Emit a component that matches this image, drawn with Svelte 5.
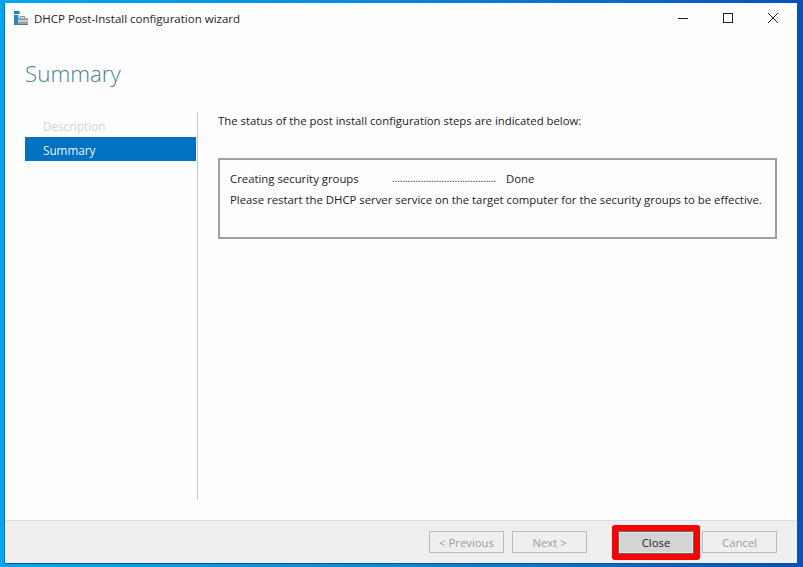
<script>
  const steps = [
    { label: 'Description', active: false },
    { label: 'Summary', active: true }
  ];
</script>

<div class="desktop">
  <div class="window">
    <div class="titlebar">
      <svg class="app-icon" width="16" height="16" viewBox="0 0 16 16">
        <rect x="0" y="1" width="5.500" height="3" fill="#1f7fc4" />
        <rect x="0" y="5" width="4.500" height="10" fill="#2a86c8" />
        <path d="M6.500 8V6.500h4V8" fill="none" stroke="#7f8c94" />
        <rect x="4" y="8" width="10" height="7" fill="#98a4ab" />
        <rect x="4" y="10.500" width="10" height="1" fill="#eef2f4" />
        <rect x="4" y="14" width="10" height="1" fill="#66737b" />
      </svg>
      <span class="title">DHCP Post-Install configuration wizard</span>
      <div class="controls">
        <svg width="12" height="12" viewBox="0 0 12 12"><path d="M1 6.500h10" stroke="#222" fill="none" /></svg>
        <svg width="12" height="12" viewBox="0 0 12 12"><rect x="1.500" y="1.500" width="9" height="9" stroke="#222" fill="none" /></svg>
        <svg width="12" height="12" viewBox="0 0 12 12"><path d="M1 1l10 10M11 1L1 11" stroke="#222" fill="none" /></svg>
      </div>
    </div>

    <h1>Summary</h1>

    <div class="body">
      <nav class="steps">
        {#each steps as step}
          <div class="step" class:active={step.active}>{step.label}</div>
        {/each}
      </nav>
      <main class="content">
        <p class="intro">The status of the post install configuration steps are indicated below:</p>
        <div class="status">
          <div class="status-row">
            <span class="task">Creating security groups</span>
            <span class="dots">........................................</span>
            <span>Done</span>
          </div>
          <div class="note">Please restart the DHCP server service on the target computer for the security groups to be effective.</div>
        </div>
      </main>
    </div>

    <footer class="footer">
      <button disabled>&lt; Previous</button>
      <button disabled>Next &gt;</button>
      <span class="ring"><button class="close">Close</button></span>
      <button disabled>Cancel</button>
    </footer>
  </div>
</div>

<style>
  :global(body){margin:0}
  .desktop{width:803px;height:567px;box-sizing:border-box;padding:3px 6px 4px 5px;background:linear-gradient(90deg,#00a6f2 0,#0a8be0 45%,#0b4fbc 100%);font-family:"Open Sans","Noto Sans",sans-serif;overflow:hidden}
  .window{height:100%;display:flex;flex-direction:column;background:#fdfdfd;box-shadow:0 1px 0 #06568f,-1px 0 0 #0a75b8;color:#222}
  .titlebar{display:flex;align-items:center;height:30px;padding:0 0 0 9px;flex:none}
  .title{margin-left:4px;font-size:11.5px;color:#1d1d1d}
  .controls{margin-left:auto;display:flex;gap:33px;padding-right:18px;align-items:center}
  .controls svg{display:block}
  h1{margin:23px 0 0 20px;font-size:22.4px;font-weight:300;line-height:36px;color:#4b7f96;height:36px;flex:none}
  .body{display:flex;flex:1;min-height:0;margin-top:20px;padding-bottom:20px}
  .steps{width:171px;margin-left:20px;padding-top:1px;flex:none}
  .step{height:24px;line-height:26px;padding-left:18px;font-size:11.7px;color:#d4d4d4}
  .step.active{background:#0072c0;color:#eaf4fb}
  .content{flex:1;min-width:0;margin-left:1px;border-left:1px solid #c9c9c9;padding-left:20px;padding-right:20px}
  .intro{margin:0;padding-top:1px;font-size:11.35px;line-height:16px;color:#222}
  .status{margin-top:29px;height:81px;box-sizing:border-box;border:2px solid #a0a0a0;padding:8px 10px;font-size:11.35px;line-height:21px;color:#222}
  .status-row{display:flex}
  .task{width:162px}
  .dots{width:114px;font-size:9.5px;font-weight:600;overflow:hidden;white-space:nowrap;color:#444}
  .note{white-space:nowrap}
  .footer{flex:none;height:43px;box-sizing:border-box;background:#efefef;border-top:1px solid #dcdcdc;display:flex;align-items:center;justify-content:flex-end;gap:8px;padding-right:20px}
  button{width:75px;height:22px;box-sizing:border-box;padding:0;border:1px solid #bdbdbd;background:#efefef;color:#9a9a9a;font:inherit;font-size:11.3px}
  .ring{display:flex;margin:-6px -6px -6px 17px;border:6px solid #f00;border-radius:3px}
  button.close{width:76px;height:23px;background:#d4d4d4;color:#222;border:1px solid #6d6d6d;box-shadow:inset 0 0 0 1px #e4e4e4}
</style>
